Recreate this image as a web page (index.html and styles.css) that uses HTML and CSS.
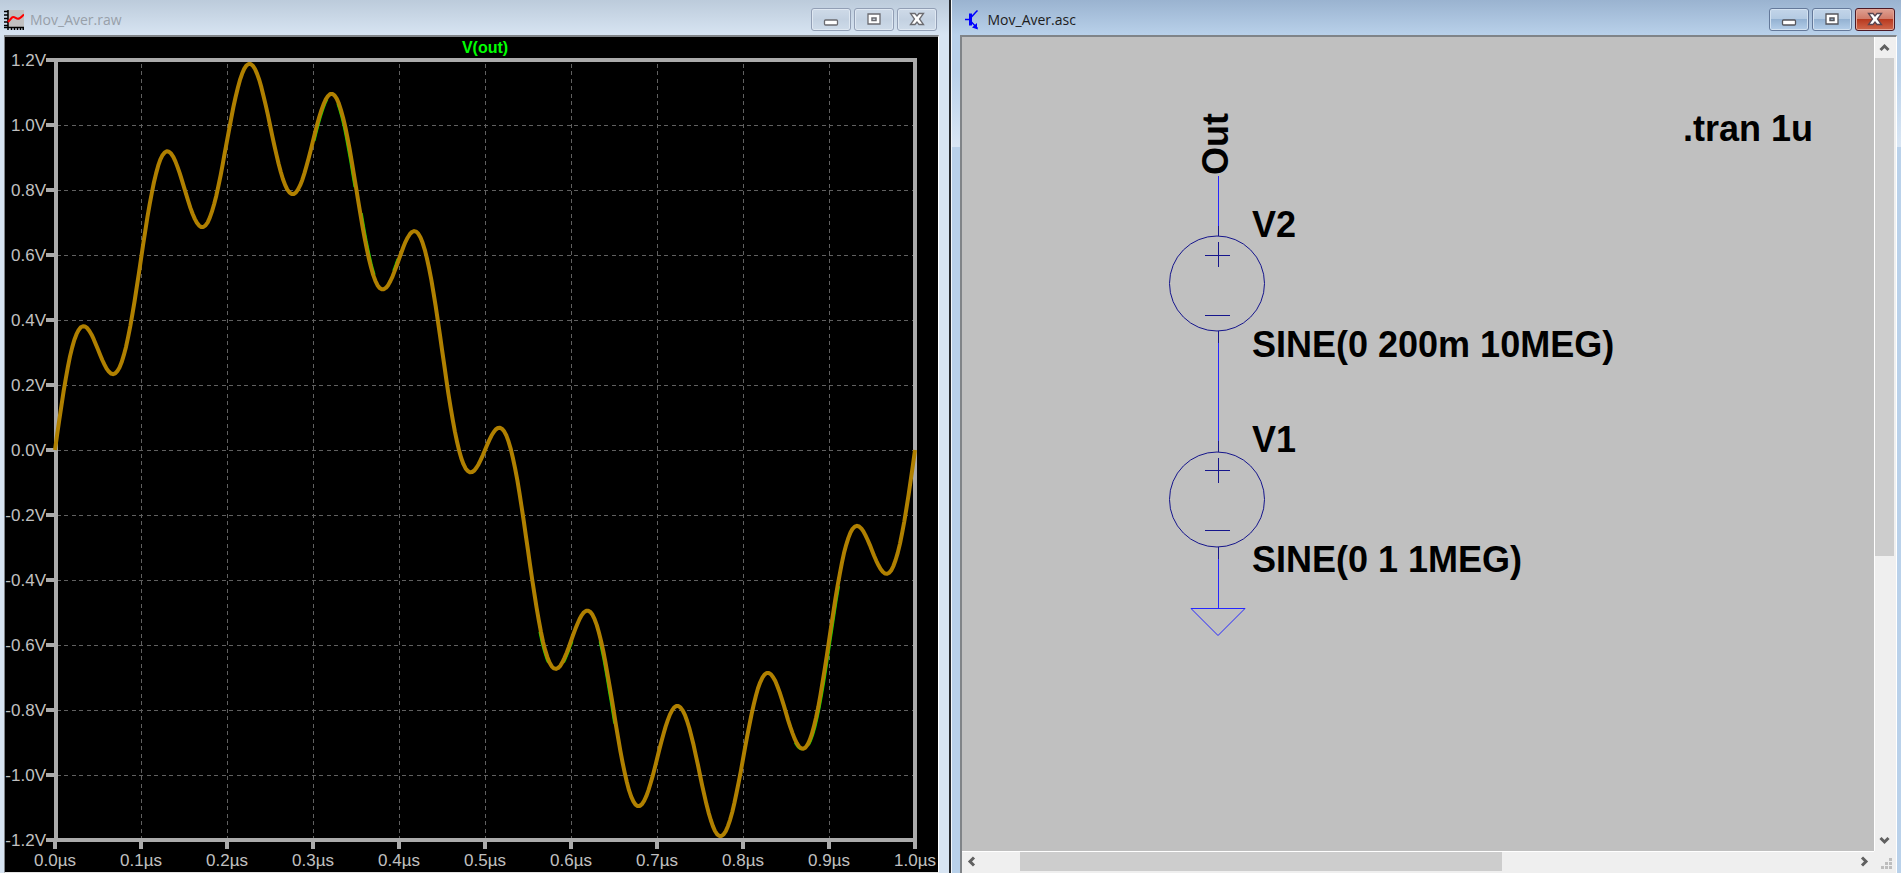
FILE: index.html
```html
<!DOCTYPE html>
<html lang="en">
<head>
<meta charset="utf-8">
<title>Mov_Aver</title>
<link rel="stylesheet" href="styles.css">
</head>
<body>
<main class="workspace">
  <section class="window window-plot" aria-label="Mov_Aver.raw">
    <header class="titlebar">
      <svg class="app-icon" width="20" height="20" viewBox="0 0 20 20" aria-hidden="true">
        <rect x="3" y="0" width="17" height="17" fill="#c0c0c0"/>
        <path d="M4 0v20M0 17.500h20" stroke="#000" stroke-width="1.500"/>
        <path d="M0 1.500h4M0 5h4M0 8.500h4M0 12h4M0 15.500h4M7.500 17v3M10.500 17v3M13.500 17v3M16.500 17v3M19.200 17v3" stroke="#000" stroke-width="1.500"/>
        <path d="M4 12l4-4.500c2-2 4 1.500 6 1.300 2 0 4-2.500 6-4.300" fill="none" stroke="#f00" stroke-width="2"/>
      </svg>
      <h1 class="title">Mov_Aver.raw</h1>
      <div class="controls">
        <button class="ctl" type="button" aria-label="Minimize"><svg width="16" height="16" viewBox="0 0 16 16"><rect x="1.500" y="8" width="13" height="5" rx="1" fill="#fff" stroke="#6b6b70" stroke-width="1.300"/></svg></button>
        <button class="ctl" type="button" aria-label="Maximize"><svg width="16" height="16" viewBox="0 0 16 16"><path d="M2 2h12v10H2z" fill="#fff" stroke="#6b6b70" stroke-width="1.300"/><path d="M6 6h4v2.500H6z" fill="#dfe8f2" stroke="#6b6b70" stroke-width="1.500"/></svg></button>
        <button class="ctl" type="button" aria-label="Close"><svg width="16" height="16" viewBox="0 0 16 16"><path d="M1.500 1.500H6L8 4l2-2.500h4.500L10.500 7l4 5.500H10L8 10l-2 2.500H1.500L5.500 7z" fill="#fff" stroke="#6b6b70" stroke-width="1.300"/></svg></button>
      </div>
    </header>
    <div class="pane pane-plot">
      <svg class="plot" id="plot" role="img" aria-label="V(out) against time"></svg>
    </div>
  </section>

  <section class="window window-schematic active" aria-label="Mov_Aver.asc">
    <header class="titlebar">
      <svg class="app-icon" width="20" height="20" viewBox="0 0 20 20" aria-hidden="true">
        <path d="M1 9.500h5" stroke="#00f" stroke-width="1.500"/>
        <path d="M6.500 3.500v12" stroke="#00f" stroke-width="3"/>
        <path d="M7 7.500l4.500-5L13.500 .5M7 11.500l6.500 7" fill="none" stroke="#00f" stroke-width="1.500"/>
        <path d="M13 13v4.500l1 2-6-2z" fill="#00f"/>
      </svg>
      <h1 class="title">Mov_Aver.asc</h1>
      <div class="controls">
        <button class="ctl" type="button" aria-label="Minimize"><svg width="16" height="16" viewBox="0 0 16 16"><rect x="1.500" y="8" width="13" height="5" rx="1" fill="#fff" stroke="#55565c" stroke-width="1.300"/></svg></button>
        <button class="ctl" type="button" aria-label="Maximize"><svg width="16" height="16" viewBox="0 0 16 16"><path d="M2 2h12v10H2z" fill="#fff" stroke="#55565c" stroke-width="1.300"/><path d="M6 6h4v2.500H6z" fill="#9fbcdb" stroke="#55565c" stroke-width="1.500"/></svg></button>
        <button class="ctl ctl-close" type="button" aria-label="Close"><svg width="16" height="16" viewBox="0 0 16 16"><path d="M1.500 1.500H6L8 4l2-2.500h4.500L10.500 7l4 5.500H10L8 10l-2 2.500H1.500L5.500 7z" fill="#fff" stroke="#5a4550" stroke-width="1.300"/></svg></button>
      </div>
    </header>
    <div class="pane pane-schematic">
      <svg class="schematic" role="img" aria-label="Two sine sources in series">
        <g class="wire">
          <path d="M256.500 139v50M256.500 306v98M256.500 522v50"/>
          <path d="M229 571.500h54l-27 27z"/>
        </g>
        <g class="part">
          <path d="M256.500 189v10M256.500 294v12M256.500 205v25M243 218.500h25M243 278.500h25"/>
          <circle cx="255" cy="246.500" r="47.500"/>
          <path d="M256.500 404v11M256.500 510v12M256.500 421v25M243 433.500h25M243 493.500h25"/>
          <circle cx="255" cy="462.500" r="47.500"/>
        </g>
        <text class="label" transform="translate(266 138) rotate(-90)">Out</text>
        <text class="label" x="290" y="200">V2</text>
        <text class="label" x="290" y="320">SINE(0 200m 10MEG)</text>
        <text class="label" x="290" y="415">V1</text>
        <text class="label" x="290" y="535">SINE(0 1 1MEG)</text>
        <text class="label" x="721" y="104">.tran 1u</text>
      </svg>
      <div class="scroll scroll-v">
        <button class="arrow" type="button" aria-label="Scroll up"><svg width="11" height="11" viewBox="0 0 11 11"><path d="M1.500 8l4-4 4 4"/></svg></button>
        <div class="track"><div class="thumb"></div></div>
        <button class="arrow" type="button" aria-label="Scroll down"><svg width="11" height="11" viewBox="0 0 11 11"><path d="M1.500 3l4 4 4-4"/></svg></button>
      </div>
      <div class="scroll scroll-h">
        <button class="arrow" type="button" aria-label="Scroll left"><svg width="11" height="11" viewBox="0 0 11 11"><path d="M8 1.500l-4 4 4 4"/></svg></button>
        <div class="track"><div class="thumb"></div></div>
        <button class="arrow" type="button" aria-label="Scroll right"><svg width="11" height="11" viewBox="0 0 11 11"><path d="M3 1.500l4 4-4 4"/></svg></button>
      </div>
      <div class="grip">
        <svg width="12" height="12" viewBox="0 0 12 12" fill="#bdbdbd"><path d="M8 0h3v3H8zM4 4h3v3H4zM8 4h3v3H8zM0 8h3v3H0zM4 8h3v3H4zM8 8h3v3H8z"/></svg>
      </div>
    </div>
  </section>
</main>
<script src="plot.js"></script>
</body>
</html>
```
FILE: styles.css
```css
* { box-sizing: border-box; }

body {
  margin: 0;
  background: #d7e4f2;
  font-family: "Open Sans", "Noto Sans", sans-serif;
}

.workspace {
  display: grid;
  grid-template-columns: minmax(0, 1fr) minmax(0, 1fr);
  height: 100vh;
  overflow: hidden;
}

.window {
  display: flex;
  flex-direction: column;
  min-height: 0;
  padding: 0 4px;
}

.window-plot {
  padding-right: 10px;
  border-right: 2px solid #24272b;
  background: linear-gradient(#bccbdb, #d7e4f2 35px);
}

.window-schematic {
  padding-left: 8px;
  border-left: 1px solid #f4f8fc;
  background: linear-gradient(#9ab3d0, #b9d1ea 35px, #b9d1ea 70px, #d9e6f4 147px, #b9d1ea 147px);
}

.titlebar {
  display: flex;
  align-items: center;
  flex: none;
  height: 35px;
  padding: 4px 2px 0 0;
}

.window-schematic .titlebar { padding-left: 4px; }

.app-icon { flex: none; }

.title {
  flex: 1;
  margin: 0 0 0 6px;
  font-size: 14px;
  line-height: 20px;
  font-weight: 400;
  color: #98a0a9;
}

.active .title { margin-left: 4px; color: #1c1c1c; }

.controls { display: flex; gap: 3px; }

.ctl {
  display: grid;
  place-items: center;
  width: 40px;
  height: 23px;
  padding: 0;
  border: 1px solid #929fb5;
  border-radius: 3px;
  background: linear-gradient(#cedae8, #c3d1e1 50%, #cedbe9);
  box-shadow: inset 0 0 0 1px #dfe8f2;
}

.active .ctl {
  border-color: #64799a;
  background: linear-gradient(#c3d5e9, #b3cae2 48%, #94b2d2 50%, #b4cee9);
  box-shadow: inset 0 0 0 1px #d3e2f1;
}

.active .ctl-close {
  border-color: #4c1a26;
  background: linear-gradient(#dfa092, #d07a68 48%, #b83a20 50%, #d0684c);
  box-shadow: inset 0 0 0 1px #e3a596;
}

.pane {
  flex: 1;
  min-height: 0;
  border: solid #808488;
  border-width: 2px 1px 0 1px;
  border-right-color: #fff;
}

.pane-plot {
  background: #000;
  border-bottom: 1px solid #e4e4e4;
}

.plot {
  display: block;
  width: 100%;
  height: 100%;
}

.plot .grid { stroke: #606060; stroke-width: 1; stroke-dasharray: 4 3 4 4; shape-rendering: crispEdges; }
.plot .axis { fill: none; stroke: #ababab; stroke-width: 4; }
.plot .trace { fill: none; stroke: #b08000; stroke-width: 4; stroke-linejoin: round; }
.plot .trace-under { fill: none; stroke: #00e000; stroke-width: 3; }

.plot text {
  font-family: "Liberation Sans", Arial, sans-serif;
  font-size: 17px;
  fill: #c0c0c0;
}

.plot .legend {
  font-size: 16px;
  font-weight: 700;
  fill: #00ff00;
}

.pane-schematic {
  display: grid;
  grid-template-columns: minmax(0, 1fr) 22px;
  grid-template-rows: minmax(0, 1fr) 22px;
  border-left-width: 2px;
  background: #c0c0c0;
}

.schematic {
  display: block;
  width: 100%;
  height: 100%;
}

.wire { fill: none; stroke: #2626ff; }
.part { fill: none; stroke: #15158c; }

.label {
  font-family: "Liberation Sans", Arial, sans-serif;
  font-size: 36px;
  font-weight: 700;
  fill: #000;
}

.scroll {
  display: flex;
  min-width: 0;
  min-height: 0;
  background: #efefef;
}

.scroll-v {
  flex-direction: column;
  padding-right: 2px;
  border-left: 1px solid #fff;
}

.scroll-h {
  padding-bottom: 2px;
  border-top: 1px solid #fff;
}

.track { flex: 1; min-width: 0; min-height: 0; }
.thumb { background: #cdcdcd; }
.scroll-v .thumb { height: 64.5%; }
.scroll-h .thumb { width: 55.3%; height: 100%; margin-left: 4.4%; }

.arrow {
  display: grid;
  place-items: center;
  flex: none;
  width: 20px;
  height: 21px;
  padding: 0;
  border: 0;
  background: none;
}

.scroll-v .arrow { width: 100%; }
.scroll-h .arrow { height: 100%; }
.arrow path { fill: none; stroke: #606060; stroke-width: 3; }

.grip {
  display: flex;
  align-items: flex-end;
  justify-content: flex-end;
  padding: 3px;
  background: #efefef;
}
```
FILE: plot.js
```javascript
const NS = "http://www.w3.org/2000/svg";
const svg = document.getElementById("plot");
const margin = { left: 50, right: 23, top: 23, bottom: 32 };
const vMax = 1.2;

// SINE(0 1 1MEG) + SINE(0 200m 10MEG), time in microseconds
const vout = t => Math.sin(2 * Math.PI * t) + 0.2 * Math.sin(20 * Math.PI * t);

function add(name, attrs, text) {
  const el = document.createElementNS(NS, name);
  for (const key in attrs) el.setAttribute(key, attrs[key]);
  if (text !== undefined) el.textContent = text;
  svg.appendChild(el);
}

function draw() {
  svg.replaceChildren();
  const left = margin.left;
  const right = svg.clientWidth - margin.right;
  const top = margin.top;
  const bottom = svg.clientHeight - margin.bottom;
  const x = t => left + t * (right - left);
  const y = v => top + (vMax - v) / (2 * vMax) * (bottom - top);

  const curve = (from, to, dx) => {
    const points = [];
    const steps = Math.max(8, Math.round((to - from) * 400));
    for (let i = 0; i <= steps; i++) {
      const t = from + (to - from) * i / steps;
      points.push((x(t) + dx).toFixed(1) + "," + y(vout(t)).toFixed(1));
    }
    return points.join(" ");
  };

  for (let i = 1; i < 10; i++) {
    const gx = Math.round(x(i / 10));
    add("line", { class: "grid", x1: gx, x2: gx, y1: top + 4, y2: bottom });
  }
  for (let i = 1; i < 12; i++) {
    const gy = Math.round(y(vMax - i / 5));
    add("line", { class: "grid", x1: left + 2, x2: right, y1: gy, y2: gy });
  }

  add("rect", { class: "axis", x: left + 1, y: top, width: right - left - 1, height: bottom - top });

  for (let i = 0; i <= 10; i++) {
    const tx = Math.round(x(i / 10));
    add("line", { class: "axis", x1: tx, x2: tx, y1: bottom, y2: bottom + 9 });
    add("text", { x: tx, y: bottom + 26, "text-anchor": "middle" }, (i / 10).toFixed(1) + "µs");
  }
  for (let i = 0; i <= 12; i++) {
    const v = (6 - i) / 5;
    const ty = Math.round(y(v));
    add("line", { class: "axis", x1: left - 9, x2: left, y1: ty, y2: ty });
    add("text", { x: left - 9, y: ty + 6, "text-anchor": "end" }, v.toFixed(1) + "V");
  }

  add("text", { class: "legend", x: (left + right) / 2, y: 16, "text-anchor": "middle" }, "V(out)");

  [[0.3, 0.315, 1], [0.33, 0.35, -1], [0.355, 0.37, 1], [0.395, 0.4, -1], [0.565, 0.575, -1],
   [0.59, 0.6, 1], [0.635, 0.652, -1], [0.862, 0.87, -1], [0.875, 0.91, 1]]
    .forEach(([from, to, dx]) => add("polyline", { class: "trace-under", points: curve(from, to, dx) }));
  add("polyline", { class: "trace", points: curve(0, 1, 0) });
}

draw();
window.addEventListener("resize", draw);
```
